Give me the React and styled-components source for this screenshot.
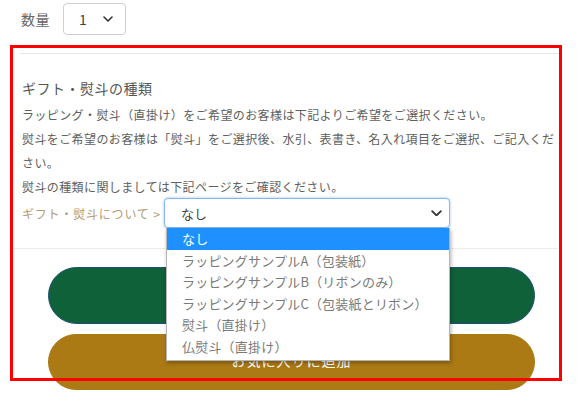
import styled, { createGlobalStyle } from "styled-components"

const GlobalStyle = createGlobalStyle`
  html, body {
    margin: 0;
    padding: 0;
    background: #fff;
  }
  body {
    font-family: "Noto Sans CJK JP", "Noto Sans", sans-serif;
    color: #555;
  }
`

const giftOptions = [
  "なし",
  "ラッピングサンプルA（包装紙）",
  "ラッピングサンプルB（リボンのみ）",
  "ラッピングサンプルC（包装紙とリボン）",
  "熨斗（直掛け）",
  "仏熨斗（直掛け）",
]

const Page = styled.div`
  position: relative;
  width: 582px;
  height: 405px;
  overflow: hidden;
`
const QuantityRow = styled.div`
  display: flex;
  align-items: center;
  gap: 13px;
  padding: 3px 0 0 21px;
`
const QuantityLabel = styled.span`
  font-size: 14px;
  color: #666;
  letter-spacing: 0.5px;
`
const SelectBox = styled.div`
  position: relative;
  display: flex;
  align-items: center;
  justify-content: space-between;
  box-sizing: border-box;
  width: ${(p) => p.$width}px;
  height: ${(p) => p.$height}px;
  padding: 0 ${(p) => p.$padRight}px 0 ${(p) => p.$padLeft}px;
  border: 1px solid ${(p) => (p.$focused ? "#86b7f0" : "#cfcfcf")};
  border-radius: 4px;
  background: #fff;
  box-shadow: ${(p) => (p.$focused ? "0 0 2px 1px rgba(120,170,230,0.35)" : "none")};
  font-size: ${(p) => p.$fontSize}px;
  color: #444;
`
const GiftSection = styled.section`
  width: 540px;
  margin: 18px 0 0 20px;
  border-top: 1px solid #e6e6e6;
  padding: 24px 0 0 2px;
`
const GiftTitle = styled.h3`
  margin: 0 0 5px;
  font-size: 14px;
  line-height: 20px;
  font-weight: 400;
  color: #555;
  letter-spacing: 0.5px;
`
const GiftText = styled.p`
  margin: 0;
  width: 540px;
  font-size: 12px;
  line-height: 24px;
  letter-spacing: 0.4px;
  color: #606060;
`
const GiftRow = styled.div`
  display: flex;
  align-items: center;
  gap: 4px;
  margin-top: -1px;
`
const GiftLink = styled.span`
  width: 138px;
  font-size: 12px;
  letter-spacing: 0.8px;
  color: #b59c72;
  white-space: nowrap;
`
const SelectWrap = styled.div`
  position: relative;
`
const OptionList = styled.ul`
  position: absolute;
  top: 100%;
  left: 2px;
  z-index: 5;
  box-sizing: border-box;
  width: 284px;
  margin: 0;
  padding: 0 0 3px;
  list-style: none;
  background: #fff;
  border: 1px solid #b5b5b5;
  border-top: none;
  box-shadow: 1px 2px 4px rgba(0, 0, 0, 0.3);
`
const OptionItem = styled.li`
  height: 21.5px;
  line-height: 21.5px;
  padding-left: 15px;
  font-size: 13px;
  letter-spacing: 0.2px;
  color: ${(p) => (p.$active ? "#fff" : "#7a7a7a")};
  background: ${(p) => (p.$active ? "#1e90ff" : "transparent")};
  white-space: nowrap;
`
const Divider = styled.hr`
  width: 545px;
  margin: 20px 0 0 13px;
  border: none;
  border-top: 1px solid #ececec;
`
const ButtonStack = styled.div`
  display: flex;
  flex-direction: column;
  gap: 10px;
  padding: 18px 47px 0 48px;
`
const PillButton = styled.button`
  height: ${(p) => p.$height}px;
  border: 1px solid ${(p) => p.$edge};
  border-radius: 30px;
  background: ${(p) => p.$bg};
  color: #fff;
  font-family: inherit;
  font-size: 14px;
  letter-spacing: 1px;
  padding: 0 0 4px;
  cursor: pointer;
`
const Highlight = styled.div`
  position: absolute;
  left: 10px;
  top: 45px;
  width: 552px;
  height: 336px;
  box-sizing: border-box;
  border: 3px solid #ff0000;
  pointer-events: none;
  z-index: 4;
`

const Chevron = ({ size }) => (
  <svg width={size} height={size * 0.6} viewBox="0 0 10 6" fill="none">
    <path d="M1 1l4 4 4-4" stroke="#333" strokeWidth="1.6" strokeLinecap="round" strokeLinejoin="round" />
  </svg>
)

const App = () => {
  return (
    <Page>
      <GlobalStyle />
      <QuantityRow>
        <QuantityLabel>数量</QuantityLabel>
        <SelectBox $width={63} $height={32} $padLeft={15} $padRight={12} $fontSize={14}>
          1
          <Chevron size={10} />
        </SelectBox>
      </QuantityRow>

      <GiftSection>
        <GiftTitle>ギフト・熨斗の種類</GiftTitle>
        <GiftText>ラッピング・熨斗（直掛け）をご希望のお客様は下記よりご希望をご選択ください。</GiftText>
        <GiftText>熨斗をご希望のお客様は「熨斗」をご選択後、水引、表書き、名入れ項目をご選択、ご記入ください。</GiftText>
        <GiftText>熨斗の種類に関しましては下記ページをご確認ください。</GiftText>
        <GiftRow>
          <GiftLink>ギフト・熨斗について &gt;</GiftLink>
          <SelectWrap>
            <SelectBox $focused $width={286} $height={30} $padLeft={16} $padRight={7} $fontSize={13}>
              なし
              <Chevron size={11} />
            </SelectBox>
            <OptionList>
              {giftOptions.map((opt, i) => (
                <OptionItem key={opt} $active={i === 0}>{opt}</OptionItem>
              ))}
            </OptionList>
          </SelectWrap>
        </GiftRow>
      </GiftSection>

      <Divider />

      <ButtonStack>
        <PillButton $height={57} $bg="#0f613a" $edge="#1f4f78">カートに入れる</PillButton>
        <PillButton $height={56} $bg="#ab7a15" $edge="#ab7a15">お気に入りに追加</PillButton>
      </ButtonStack>

      <Highlight />
    </Page>
  )
}

export default App
